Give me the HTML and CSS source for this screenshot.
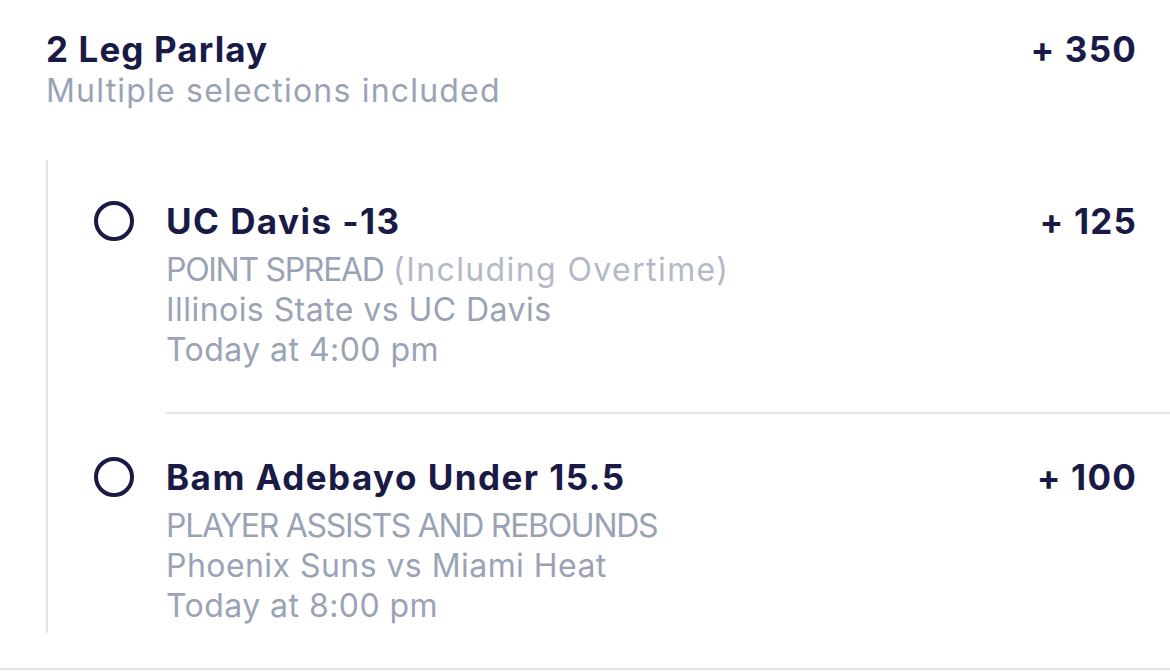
FILE: index.html
```html
<!DOCTYPE html>
<html>
<head>
<meta charset="utf-8">
<link rel="stylesheet" href="styles.css">
</head>
<body>
<div class="card">
  <div class="header">
    <div class="header-text">
      <div class="title">2 Leg Parlay</div>
      <div class="subtitle">Multiple selections included</div>
    </div>
    <div class="odds">+ 350</div>
  </div>
  <div class="legs">
    <div class="leg">
      <div class="radio"></div>
      <div class="leg-body sep">
        <div class="leg-top">
          <div class="leg-title">UC Davis -13</div>
          <div class="odds">+ 125</div>
        </div>
        <div class="line"><span class="caps">POINT SPREAD</span> <span class="light">(Including Overtime)</span></div>
        <div class="line">Illinois State vs UC Davis</div>
        <div class="line">Today at 4:00 pm</div>
      </div>
    </div>
    <div class="leg leg2">
      <div class="radio"></div>
      <div class="leg-body">
        <div class="leg-top">
          <div class="leg-title">Bam Adebayo Under 15.5</div>
          <div class="odds">+ 100</div>
        </div>
        <div class="line"><span class="caps">PLAYER ASSISTS AND REBOUNDS</span></div>
        <div class="line">Phoenix Suns vs Miami Heat</div>
        <div class="line">Today at 8:00 pm</div>
      </div>
    </div>
  </div>
</div>
</body>
</html>
```
FILE: styles.css
```css
html, body {
  margin: 0;
  padding: 0;
  background: #ffffff;
}
body {
  font-family: Inter, "Open Sans", sans-serif;
  color: #1a1a47;
  width: 1170px;
  height: 671px;
  overflow: hidden;
}
.card {
  padding-top: 28px;
  border-bottom: 2px solid #e3e4e8;
  height: 640px;
}
.header {
  display: flex;
  justify-content: space-between;
  align-items: flex-start;
  padding: 0 34px 0 46px;
}
.title {
  font-size: 35px;
  font-weight: 700;
  line-height: 42px;
  letter-spacing: 1.1px;
}
.subtitle {
  font-size: 32px;
  line-height: 40px;
  margin-top: 1px;
  color: #9aa3b6;
  letter-spacing: 1.2px;
}
.odds {
  font-size: 35px;
  font-weight: 700;
  line-height: 42px;
  white-space: nowrap;
  letter-spacing: 1.2px;
  margin-right: -1px;
}
.legs {
  margin: 49px 0 0 46px;
  border-left: 2px solid #e3e4e8;
}
.leg {
  display: flex;
  align-items: flex-start;
  padding-top: 40px;
}
.leg2 {
  padding-top: 42px;
  padding-bottom: 7px;
}
.radio {
  flex: none;
  width: 32px;
  height: 32px;
  border: 4px solid #1a1a47;
  border-radius: 50%;
  margin: 1px 32px 0 46px;
}
.leg-body {
  flex: 1;
  padding-right: 34px;
}
.leg-body.sep {
  padding-bottom: 42px;
  border-bottom: 2px solid #e3e4e8;
}
.leg-top {
  display: flex;
  justify-content: space-between;
  align-items: flex-start;
  margin-bottom: 8px;
}
.leg-title {
  font-size: 35px;
  font-weight: 700;
  line-height: 42px;
  letter-spacing: 1.45px;
}
.line {
  font-size: 32px;
  line-height: 40px;
  color: #9aa3b6;
  letter-spacing: 0.45px;
}
.caps {
  letter-spacing: -1.3px;
}
.light {
  color: #b3b9c7;
  letter-spacing: 1.4px;
}
```
